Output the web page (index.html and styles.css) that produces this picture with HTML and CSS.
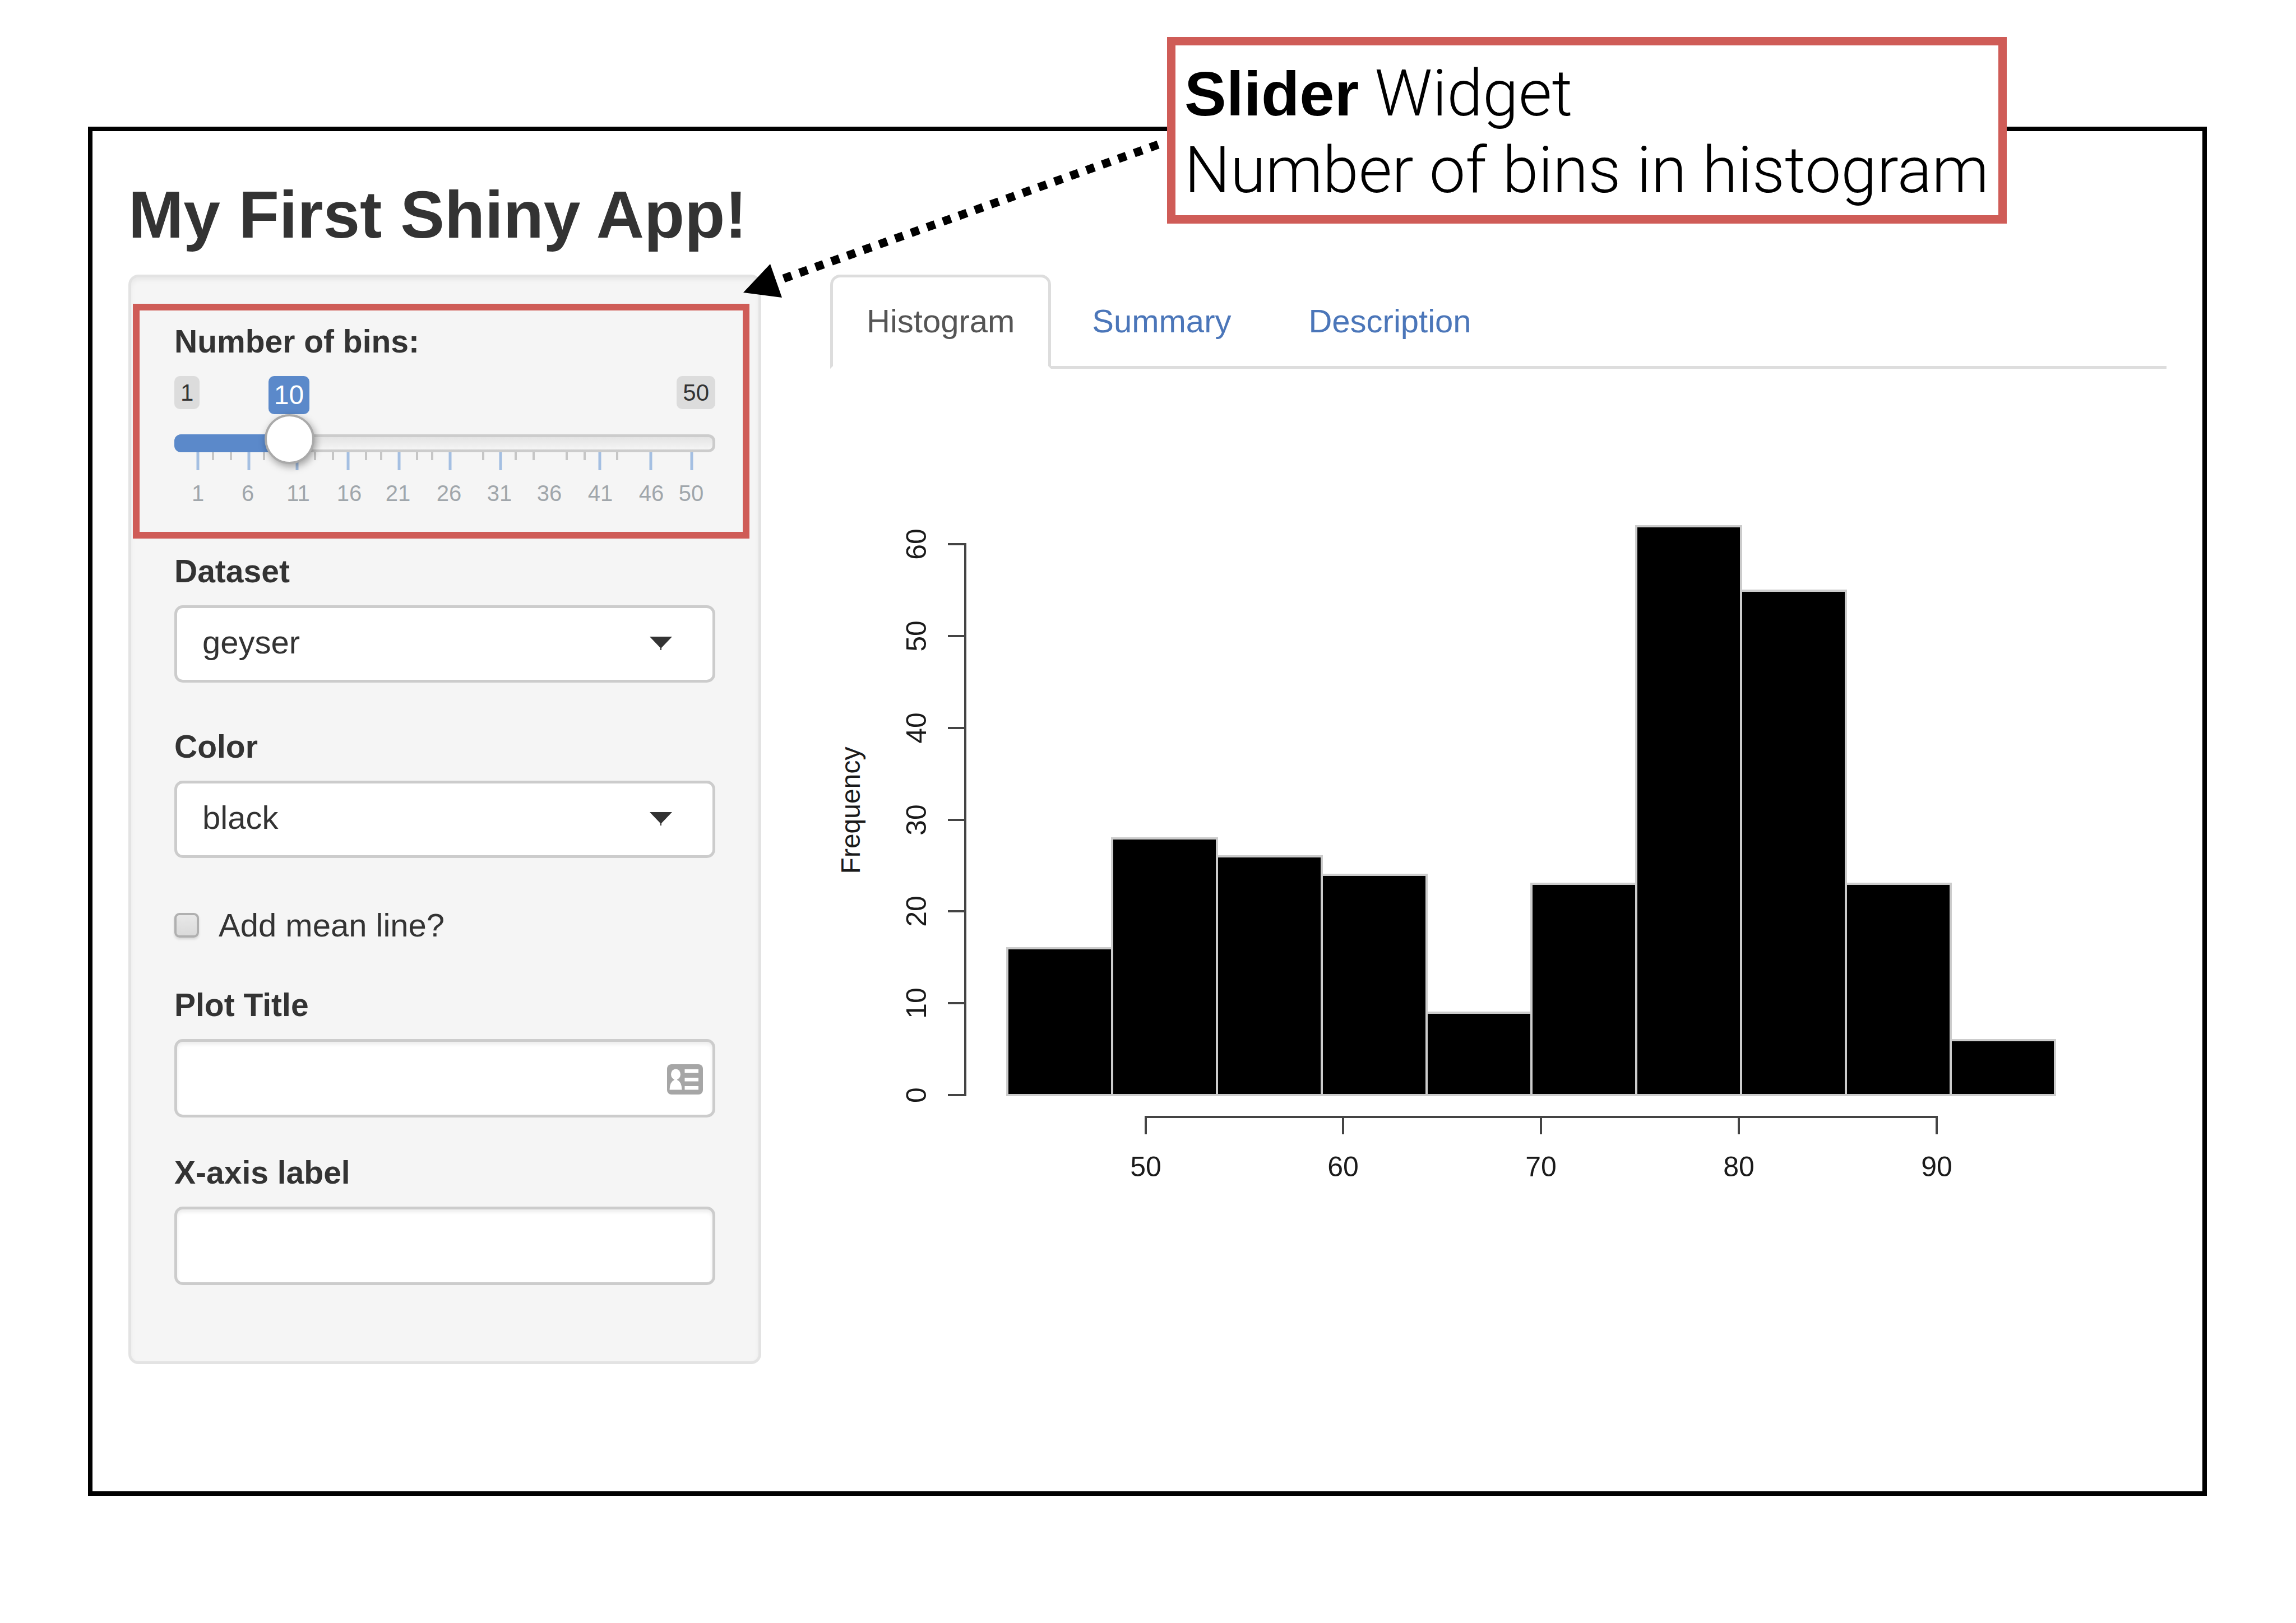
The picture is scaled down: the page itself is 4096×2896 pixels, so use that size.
FILE: index.html
```html
<!DOCTYPE html>
<html lang="en">
<head>
<meta charset="utf-8">
<title>My First Shiny App!</title>
<link rel="stylesheet" href="styles.css">
</head>
<body>
<main class="app">
  <h1 class="app-title">My First Shiny App!</h1>
  <div class="layout">
    <form class="sidebar">
      <div class="slider-group">
        <label class="label" for="bins">Number of bins:</label>
        <div class="slider-values">
          <span class="limit">1</span>
          <output class="current" for="bins">10</output>
          <span class="limit">50</span>
        </div>
        <div class="track">
          <div class="track-fill"></div>
          <input class="range" id="bins" type="range" min="1" max="50" value="10">
        </div>
        <svg class="scale" viewBox="0 0 965 100" aria-hidden="true">
          <path class="tick-major" d="M42 0v32M133 0v32M219 0v32M310 0v32M401 0v32M492 0v32M582 0v32M759 0v32M850 0v32M923 0v32"/>
          <path class="tick-minor" d="M69 0v14M101 0v14M160 0v14M251 0v14M283 0v14M342 0v14M369 0v14M433 0v14M460 0v14M551 0v14M609 0v14M641 0v14M700 0v14M732 0v14M790 0v14"/>
          <g class="scale-text">
            <text x="42" y="87">1</text><text x="131" y="87">6</text><text x="221" y="87">11</text><text x="312" y="87">16</text><text x="399" y="87">21</text><text x="490" y="87">26</text><text x="580" y="87">31</text><text x="669" y="87">36</text><text x="760" y="87">41</text><text x="851" y="87">46</text><text x="922" y="87">50</text>
          </g>
        </svg>
      </div>

      <div class="field">
        <label class="label" for="dataset">Dataset</label>
        <div class="control">
          <select class="select" id="dataset"><option>geyser</option></select>
          <svg class="caret" viewBox="0 0 40 24" aria-hidden="true"><path d="M0 0H40L21 20V24H19V20Z"/></svg>
        </div>
      </div>

      <div class="field">
        <label class="label" for="color">Color</label>
        <div class="control">
          <select class="select" id="color"><option>black</option></select>
          <svg class="caret" viewBox="0 0 40 24" aria-hidden="true"><path d="M0 0H40L21 20V24H19V20Z"/></svg>
        </div>
      </div>

      <label class="check"><input class="check-box" type="checkbox"><span>Add mean line?</span></label>

      <div class="field text-field">
        <label class="label" for="plot-title">Plot Title</label>
        <div class="control">
          <input class="input" id="plot-title" type="text">
          <svg class="card-icon" viewBox="0 0 64 54" aria-hidden="true">
            <rect width="64" height="54" rx="8" fill="#a6a6a6"/>
            <g fill="#fff">
              <ellipse cx="15.5" cy="18" rx="8.5" ry="9.5"/>
              <path d="M13 26h5v2q8 3 8.500 17.500h-22Q5 31 13 28Z"/>
              <path d="M31.500 9H56v6.500H31.500zM31.500 24H56v6.500H31.500zM31.500 39H56v6.500H31.500z"/>
            </g>
          </svg>
        </div>
      </div>

      <div class="field text-field">
        <label class="label" for="x-label">X-axis label</label>
        <div class="control"><input class="input" id="x-label" type="text"></div>
      </div>
    </form>

    <section class="content">
      <nav class="tabs">
        <a class="tab active" href="#histogram">Histogram</a>
        <a class="tab" href="#summary">Summary</a>
        <a class="tab" href="#description">Description</a>
      </nav>
      <svg class="plot" id="histogram" viewBox="0 0 2384 1500" role="img" aria-label="Histogram">
        <g class="bars">
          <rect x="316" y="1034" width="187" height="262"/>
          <rect x="503" y="838" width="187" height="458"/>
          <rect x="690" y="870" width="187" height="426"/>
          <rect x="877" y="903" width="187" height="393"/>
          <rect x="1064" y="1149" width="187" height="147"/>
          <rect x="1251" y="919" width="187" height="377"/>
          <rect x="1438" y="281" width="187" height="1015"/>
          <rect x="1625" y="396" width="187" height="900"/>
          <rect x="1812" y="919" width="187" height="377"/>
          <rect x="1999" y="1198" width="186" height="98"/>
        </g>
        <path class="axis" d="M210 313H241V1296H210M210 477H241M210 641H241M210 805H241M210 968H241M210 1132H241"/>
        <path class="axis" d="M563 1366V1335H1974V1366M915 1335V1366M1268 1335V1366M1621 1335V1366"/>
        <g class="plot-text">
          <text transform="translate(171 1296) rotate(-90)">0</text>
          <text transform="translate(171 1132) rotate(-90)">10</text>
          <text transform="translate(171 968) rotate(-90)">20</text>
          <text transform="translate(171 805) rotate(-90)">30</text>
          <text transform="translate(171 641) rotate(-90)">40</text>
          <text transform="translate(171 477) rotate(-90)">50</text>
          <text transform="translate(171 313) rotate(-90)">60</text>
          <text class="axis-title" transform="translate(53 788) rotate(-90)">Frequency</text>
          <text x="563" y="1441">50</text>
          <text x="915" y="1441">60</text>
          <text x="1268" y="1441">70</text>
          <text x="1621" y="1441">80</text>
          <text x="1974" y="1441">90</text>
        </g>
      </svg>
    </section>
  </div>

  <svg class="arrow" viewBox="0 0 760 290" aria-hidden="true">
    <path d="M746 8L78 247" pathLength="47" stroke="#000" stroke-width="15" stroke-dasharray="1 1"/>
    <path d="M6 272L54 221L75 281Z"/>
  </svg>
  <aside class="callout">
    <p class="callout-line"><strong>Slider</strong> Widget</p>
    <p class="callout-line">Number of bins in histogram</p>
  </aside>
</main>
</body>
</html>
```
FILE: styles.css
```css
* {
  box-sizing: border-box;
}

body {
  margin: 0;
  min-height: 100vh;
  display: flex;
  padding: 226px 159px 227px 157px;
  background: #fff;
  color: #333;
  font: 58px/64px "Liberation Sans", Arial, sans-serif;
}

.app {
  position: relative;
  flex: 1;
  padding: 84px 64px 0;
  border: 8px solid #000;
}

.app-title {
  margin: 0 0 42px;
  font-size: 118px;
  line-height: 130px;
  font-weight: 700;
}

.layout {
  display: grid;
  grid-template-columns: 1129fr 2384fr;
  column-gap: 123px;
  align-items: start;
}

.sidebar {
  padding: 82px 77px 136px;
  border: 5px solid #e3e3e3;
  border-radius: 18px;
  background: #f5f5f5;
  box-shadow: inset 0 5px 8px rgba(0, 0, 0, 0.05);
}

.label {
  display: block;
  font-size: 57px;
  font-weight: 700;
}

/* Slider */

.slider-group {
  position: relative;
}

.slider-group::after {
  content: "";
  position: absolute;
  inset: -35px -61px -54px -74px;
  border: 12px solid #cf5c57;
  pointer-events: none;
}

.slider-values {
  position: relative;
  display: flex;
  justify-content: space-between;
  align-items: flex-start;
  height: 68px;
  margin-top: 30px;
}

.limit {
  padding: 0 11px;
  border-radius: 10px;
  background: #dcdcdc;
  font-size: 42px;
  line-height: 59px;
}

.current {
  position: absolute;
  left: calc(45px + (100% - 89px) * 9 / 49 - 38px);
  width: 73px;
  border-radius: 10px;
  background: #5b89ca;
  color: #fff;
  font-size: 48px;
  line-height: 68px;
  text-align: center;
}

.track {
  position: relative;
  z-index: 1;
  height: 32px;
  margin-top: 36px;
  border: 5px solid #ccc;
  border-radius: 12px;
  background: linear-gradient(#e4e4e4, #f5f5f5);
}

.track-fill {
  position: absolute;
  inset: -5px auto -5px -5px;
  width: 21%;
  border-radius: 12px 0 0 12px;
  background: #5b89ca;
}

.range {
  position: absolute;
  left: -5px;
  top: -5px;
  width: calc(100% + 10px);
  height: 32px;
  margin: 0;
  appearance: none;
  background: none;
}

.range::-webkit-slider-runnable-track {
  height: 32px;
}

.range::-webkit-slider-thumb {
  appearance: none;
  width: 89px;
  height: 89px;
  margin-top: -36px;
  border: 4px solid #aaa;
  border-radius: 50%;
  background: #fff;
  box-shadow: 3px 5px 14px rgba(0, 0, 0, 0.35);
}

.scale {
  display: block;
  width: 100%;
}

.tick-major {
  stroke: #a4bfe2;
  stroke-width: 5;
}

.tick-minor {
  stroke: #c6c6c6;
  stroke-width: 4;
}

.scale-text {
  fill: #a0a6ab;
  font-size: 40px;
  text-anchor: middle;
}

/* Fields */

.slider-group + .field {
  margin-top: 80px;
}

.field {
  margin-top: 82px;
}

.control {
  position: relative;
  margin-top: 29px;
}

.select,
.input {
  display: block;
  width: 100%;
  height: 140px;
  padding: 0 45px;
  border: 5px solid #ccc;
  border-radius: 15px;
  background: #fff;
  color: #333;
  font: inherit;
}

.select {
  height: 138px;
  padding: 0 90px 6px 45px;
  appearance: none;
}

.input {
  box-shadow: inset 0 5px 6px rgba(0, 0, 0, 0.07);
}

.caret {
  position: absolute;
  top: 56px;
  right: 77px;
  width: 40px;
  fill: #333;
  pointer-events: none;
}

.card-icon {
  position: absolute;
  top: 45px;
  right: 22px;
  width: 64px;
}

.check {
  display: flex;
  align-items: center;
  gap: 35px;
  margin-top: 88px;
}

.check-box {
  width: 44px;
  height: 44px;
  margin: 0;
  appearance: none;
  border: 4px solid #b0b0b0;
  border-radius: 9px;
  background: linear-gradient(#e8e8e8, #dadada);
  box-shadow: 0 3px 4px rgba(0, 0, 0, 0.12);
}

.check + .text-field {
  margin-top: 78px;
}

.text-field {
  margin-top: 66px;
}

/* Tabs and plot */

.tabs {
  display: flex;
  gap: 8px;
  border-bottom: 5px solid #ddd;
}

.tab {
  margin-bottom: -5px;
  padding: 46px 60px 48px;
  border: 5px solid transparent;
  color: #4b76b9;
  text-decoration: none;
}

.active {
  border-color: #ddd #ddd #fff;
  border-radius: 18px 18px 0 0;
  background: #fff;
  color: #555;
}

.plot {
  display: block;
  width: 100%;
}

.bars {
  fill: #000;
  stroke: #ccc;
  stroke-width: 4;
}

.axis {
  fill: none;
  stroke: #444;
  stroke-width: 4;
}

.plot-text {
  fill: #1a1a1a;
  font-size: 50px;
  text-anchor: middle;
}

.axis-title {
  font-size: 48px;
}

/* Annotation */

.arrow {
  position: absolute;
  left: 1155px;
  top: 16px;
  width: 760px;
}

.callout {
  position: absolute;
  left: 1917px;
  top: -168px;
  padding: 18px 17px 12px 16px;
  border: 15px solid #cf5c57;
  background: #fff;
  color: #000;
  font: 300 115px/136px Roboto, "Liberation Sans", sans-serif;
  white-space: nowrap;
}

.callout-line {
  margin: 0;
}

.callout strong {
  font-family: "Liberation Sans", Arial, sans-serif;
  font-size: 112px;
  font-weight: 700;
}
```
